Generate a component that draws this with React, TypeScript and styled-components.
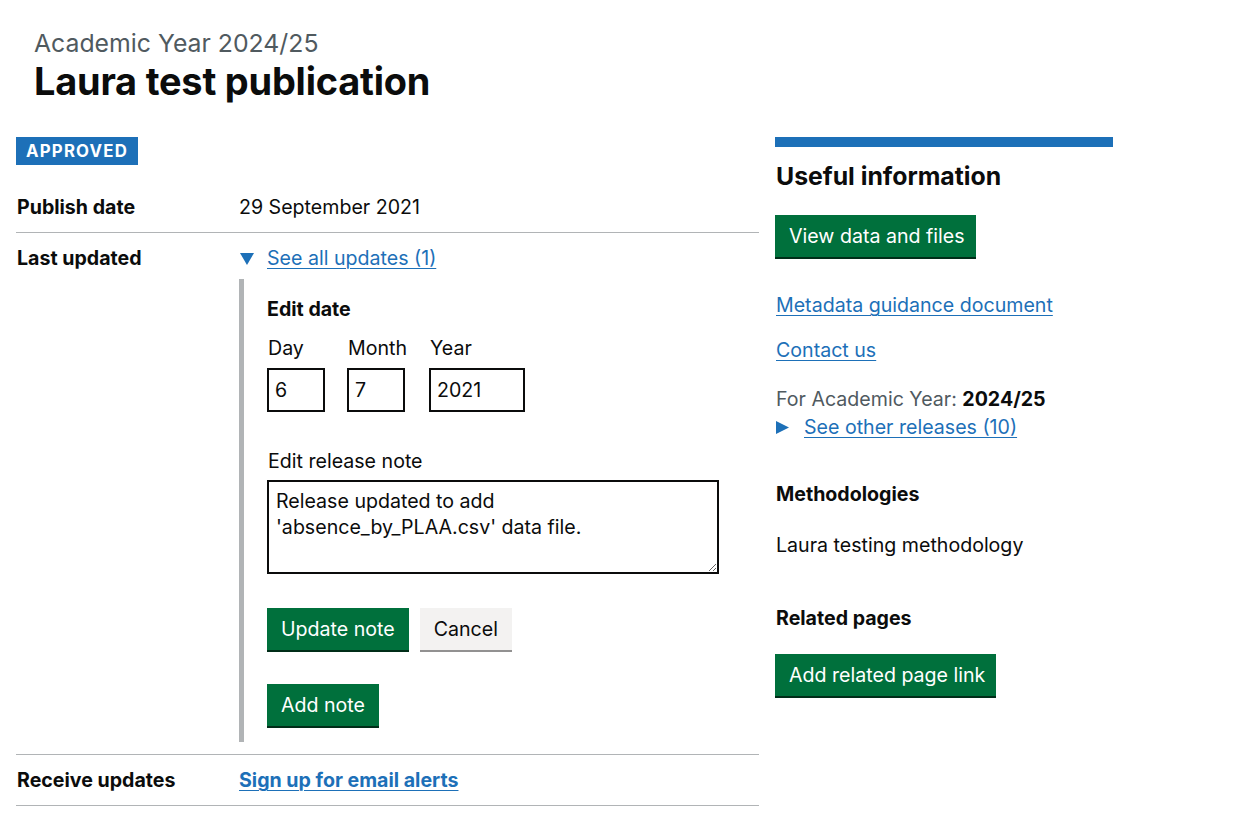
import React from "react";
import styled, { createGlobalStyle } from "styled-components";

const GlobalStyle = createGlobalStyle`
  html, body { margin: 0; padding: 0; background: #ffffff; }
  body {
    font-family: Inter, "Noto Sans", Arial, sans-serif;
    color: #0b0c0c;
    font-size: 19.6px;
    line-height: 25px;
  }
  * { box-sizing: border-box; }
`;

const Page = styled.div`
  padding: 28px 16px 0 16px;
  width: 1238px;
`;

const Header = styled.header`
  padding-left: 18px;
`;

const Caption = styled.span`
  display: block;
  font-size: 24.8px;
  line-height: 30px;
  color: #505a5f;
`;

const Title = styled.h1`
  margin: 3px 0 0 0;
  font-size: 37.9px;
  line-height: 40px;
  font-weight: 700;
  letter-spacing: -0.2px;
`;

const Columns = styled.div`
  display: flex;
  gap: 16px;
  margin-top: 36px;
  align-items: flex-start;
`;

const Main = styled.main`
  width: 743px;
`;

const Tag = styled.strong`
  display: inline-flex;
  align-items: center;
  height: 28px;
  padding: 0 10px;
  background: #1d70b8;
  color: #ffffff;
  font-size: 16.8px;
  font-weight: 700;
  letter-spacing: 1.2px;
  text-transform: uppercase;
`;

const SummaryList = styled.dl`
  margin: 17px 0 0 0;
`;

const SummaryRow = styled.div`
  display: grid;
  grid-template-columns: 223px 1fr;
  border-bottom: 1px solid #b1b4b6;
  padding: 13px 0 12px 0;
`;

const Key = styled.dt`
  font-weight: 700;
  padding-left: 1px;
`;

const Value = styled.dd`
  margin: 0;
`;

const Link = styled.a<{ $bold?: boolean }>`
  color: #1d70b8;
  font-weight: ${p => (p.$bold ? 700 : 400)};
  text-decoration: underline;
  text-decoration-thickness: 1px;
  text-underline-offset: 3px;
  cursor: pointer;
`;

const Summary = styled.div`
  display: flex;
  align-items: center;
  gap: 13px;
  padding-left: 1px;
`;

const Triangle = styled.svg`
  flex: none;
  fill: #1d70b8;
  display: block;
`;

const DetailsText = styled.div`
  margin-top: 8px;
  border-left: 5px solid #b1b4b6;
  padding: 18px 0 14px 23px;
`;

const Legend = styled.div`
  font-weight: 700;
`;

const DateInputs = styled.div`
  display: flex;
  gap: 22px;
  margin-top: 14px;
`;

const DateItem = styled.div`
  display: flex;
  flex-direction: column;
  align-items: flex-start;
`;

const Label = styled.label`
  display: block;
  padding-left: 1px;
`;

const Input = styled.input<{ $w: number }>`
  margin-top: 7px;
  width: ${p => p.$w}px;
  height: 44px;
  border: 2px solid #0b0c0c;
  padding: 0 6px;
  font: inherit;
  color: #0b0c0c;
  border-radius: 0;
  background: #fff;
`;

const NoteGroup = styled.div`
  margin-top: 37px;
`;

const TextArea = styled.textarea`
  display: block;
  margin-top: 6px;
  width: 452px;
  height: 94px;
  border: 2px solid #0b0c0c;
  border-radius: 0;
  padding: 6px 7px;
  font: inherit;
  line-height: 26px;
  color: #0b0c0c;
`;

const ButtonGroup = styled.div`
  display: flex;
  gap: 11px;
  margin-top: 34px;
`;

const Button = styled.button<{ $variant?: "primary" | "secondary" }>`
  display: inline-flex;
  align-items: center;
  height: 42px;
  padding: 0 14px;
  border: 0;
  border-radius: 0;
  font: inherit;
  cursor: pointer;
  background: ${p => (p.$variant === "secondary" ? "#f3f2f1" : "#00703c")};
  color: ${p => (p.$variant === "secondary" ? "#0b0c0c" : "#ffffff")};
  box-shadow: 0 2px 0 ${p => (p.$variant === "secondary" ? "#929191" : "#002d18")};
  margin-bottom: 2px;
`;

const StackedButton = styled(Button)`
  margin-top: 32px;
`;

const Aside = styled.aside`
  width: 338px;
  border-top: 10px solid #1d70b8;
  padding-top: 14px;
`;

const AsideHeading = styled.h2`
  margin: 0 0 0 1px;
  font-size: 24.8px;
  line-height: 30px;
  font-weight: 700;
`;

const AsideSubheading = styled.h3<{ $gap: number }>`
  margin: ${p => p.$gap}px 0 0 1px;
  font-size: 19.6px;
  line-height: 25px;
  font-weight: 700;
`;

const Block = styled.div<{ $gap: number }>`
  margin-top: ${p => p.$gap}px;
  padding-left: 1px;
`;

const Muted = styled.span`
  color: #505a5f;
`;

const Strong = styled.strong`
  font-weight: 700;
  color: #0b0c0c;
`;

const ReleasesToggle = styled.div`
  display: flex;
  align-items: center;
  gap: 15px;
  margin-top: 3px;
`;

const AsideButtonWrap = styled.div<{ $gap: number }>`
  margin-top: ${p => p.$gap}px;
`;

const CompactButton = styled(Button)`
  padding: 0 11px 0 14px;
`;

export default function App() {
  return (
    <Page>
      <GlobalStyle />
      <Header>
        <Caption>Academic Year 2024/25</Caption>
        <Title>Laura test publication</Title>
      </Header>
      <Columns>
        <Main>
          <Tag>Approved</Tag>
          <SummaryList>
            <SummaryRow>
              <Key>Publish date</Key>
              <Value>29 September 2021</Value>
            </SummaryRow>
            <SummaryRow>
              <Key>Last updated</Key>
              <Value>
                <Summary>
                  <Triangle width="14" height="12" viewBox="0 0 14 12" aria-hidden="true">
                    <polygon points="0,0 14,0 7,12" />
                  </Triangle>
                  <Link>See all updates (1)</Link>
                </Summary>
                <DetailsText>
                  <Legend>Edit date</Legend>
                  <DateInputs>
                    <DateItem>
                      <Label>Day</Label>
                      <Input $w={58} defaultValue="6" />
                    </DateItem>
                    <DateItem>
                      <Label>Month</Label>
                      <Input $w={58} defaultValue="7" />
                    </DateItem>
                    <DateItem>
                      <Label>Year</Label>
                      <Input $w={96} defaultValue="2021" />
                    </DateItem>
                  </DateInputs>
                  <NoteGroup>
                    <Label>Edit release note</Label>
                    <TextArea defaultValue={"Release updated to add 'absence_by_PLAA.csv' data file."} />
                  </NoteGroup>
                  <ButtonGroup>
                    <Button>Update note</Button>
                    <Button $variant="secondary">Cancel</Button>
                  </ButtonGroup>
                  <StackedButton>Add note</StackedButton>
                </DetailsText>
              </Value>
            </SummaryRow>
            <SummaryRow>
              <Key>Receive updates</Key>
              <Value>
                <Link $bold>Sign up for email alerts</Link>
              </Value>
            </SummaryRow>
          </SummaryList>
        </Main>
        <Aside>
          <AsideHeading>Useful information</AsideHeading>
          <AsideButtonWrap $gap={24}>
            <CompactButton>View data and files</CompactButton>
          </AsideButtonWrap>
          <Block $gap={34}>
            <Link>Metadata guidance document</Link>
          </Block>
          <Block $gap={20}>
            <Link>Contact us</Link>
          </Block>
          <Block $gap={24}>
            <Muted>For Academic Year: </Muted>
            <Strong>2024/25</Strong>
            <ReleasesToggle>
              <Triangle width="13" height="13" viewBox="0 0 13 13" aria-hidden="true">
                <polygon points="0,0 13,6.5 0,13" />
              </Triangle>
              <Link>See other releases (10)</Link>
            </ReleasesToggle>
          </Block>
          <AsideSubheading $gap={42}>Methodologies</AsideSubheading>
          <Block $gap={26}>Laura testing methodology</Block>
          <AsideSubheading $gap={48}>Related pages</AsideSubheading>
          <AsideButtonWrap $gap={23}>
            <CompactButton>Add related page link</CompactButton>
          </AsideButtonWrap>
        </Aside>
      </Columns>
    </Page>
  );
}
